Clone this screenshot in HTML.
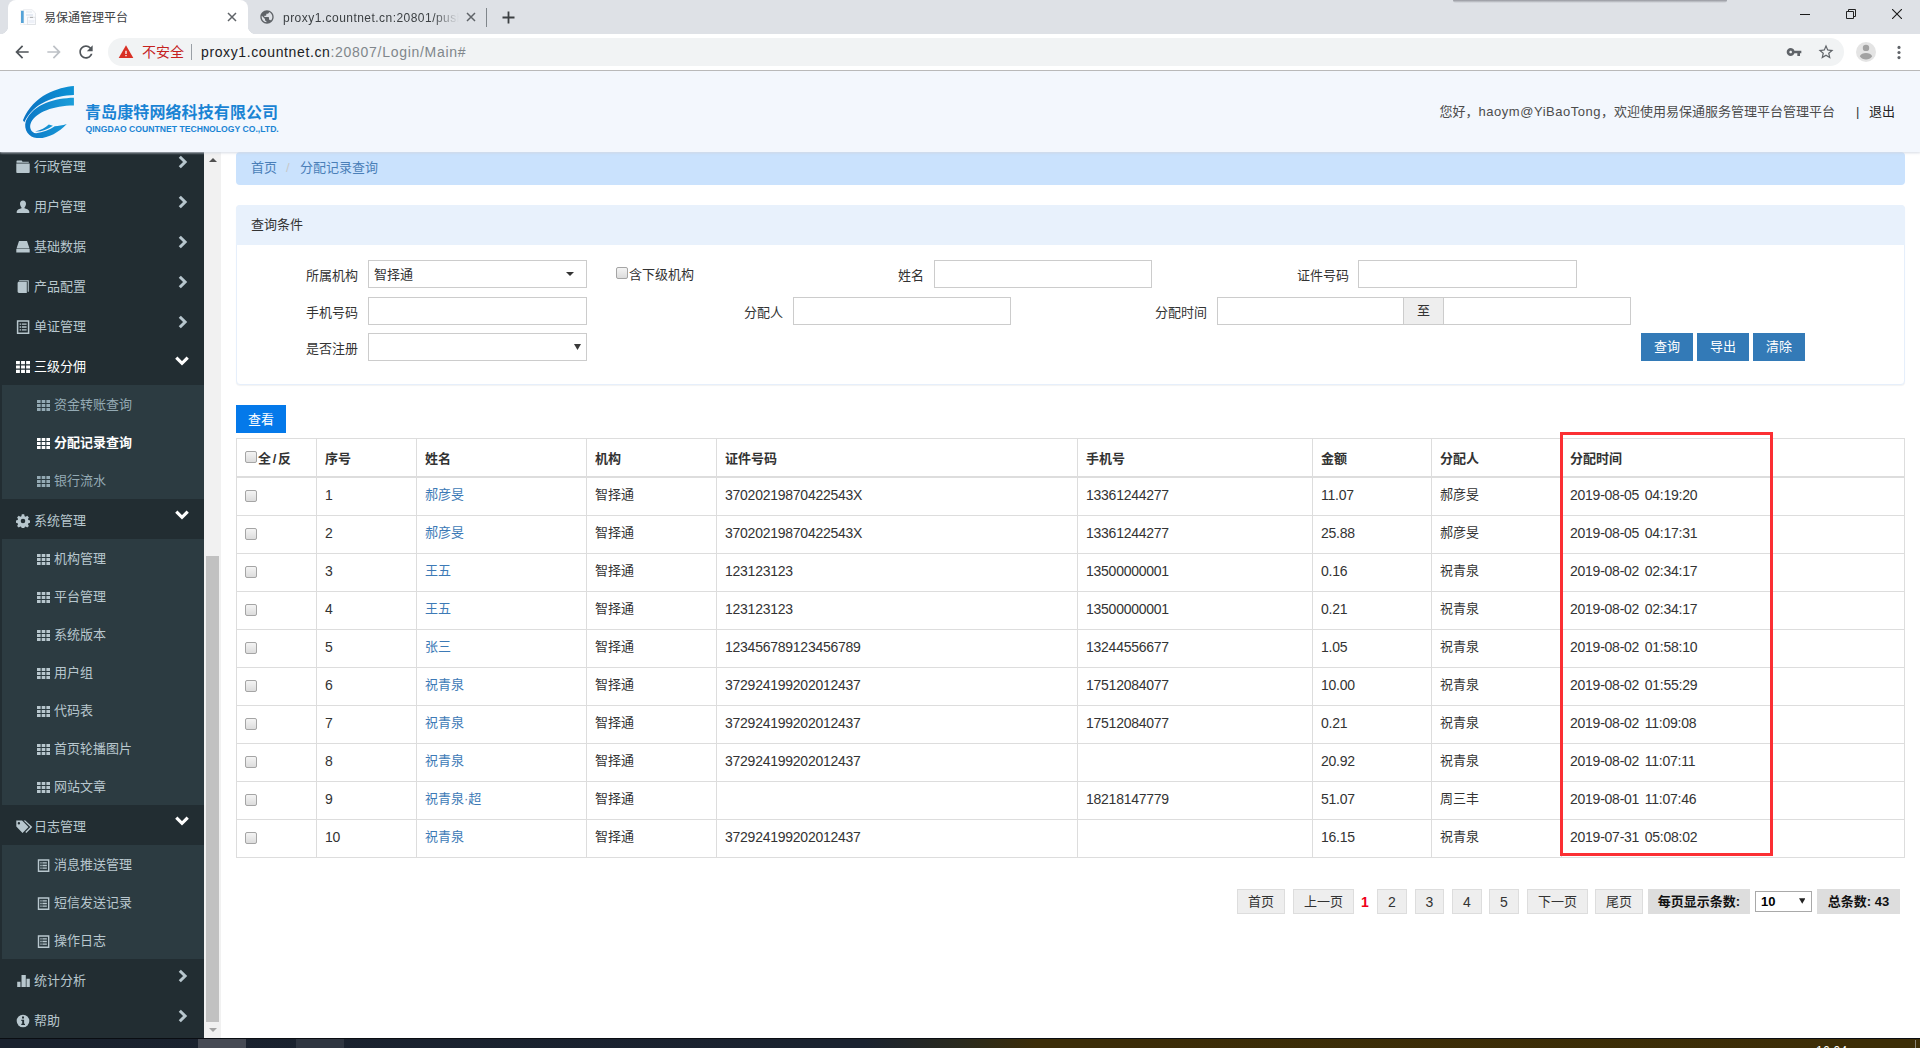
<!DOCTYPE html>
<html lang="zh-CN">
<head>
<meta charset="utf-8">
<title>易保通管理平台</title>
<style>
*{box-sizing:border-box;}
html,body{margin:0;padding:0;}
body{width:1920px;height:1048px;overflow:hidden;position:relative;background:#fff;
  font-family:"Liberation Sans","Noto Sans CJK SC",sans-serif;font-size:13px;color:#333;}
.abs{position:absolute;}
/* ===== browser chrome ===== */
#tabbar{position:absolute;left:0;top:0;width:1920px;height:34px;background:#dee1e6;}
#toolbar{position:absolute;left:0;top:34px;width:1920px;height:37px;background:#fff;border-bottom:1px solid #b9b9b9;}
#tab1{position:absolute;left:8px;top:0;width:240px;height:34px;background:#fff;border-radius:8px 8px 0 0;}
#tab1:before,#tab1:after{content:"";position:absolute;bottom:0;width:8px;height:8px;}
#tab1:before{left:-8px;background:radial-gradient(circle at 0 0,transparent 8px,#fff 8.5px);}
#tab1:after{right:-8px;background:radial-gradient(circle at 100% 0,transparent 8px,#fff 8.5px);}
.tabtxt{position:absolute;top:10px;font-size:12px;line-height:16px;color:#3c4043;white-space:nowrap;}
#omni{position:absolute;left:108px;top:4px;width:1736px;height:28px;border-radius:14px;background:#f1f3f4;}
/* ===== page ===== */
#page{position:absolute;left:0;top:71px;width:1920px;height:967px;background:#fff;overflow:hidden;}
#hdr{position:absolute;left:0;top:0;width:1920px;height:80.5px;background:#f3f7fd;box-shadow:0 0 3px 0 rgba(226,230,238,.95),0 1px 2px rgba(190,195,205,.5);z-index:5;}
#side{position:absolute;left:0;top:81px;width:204px;height:886px;background:#222d32;overflow:hidden;}
#sbar{position:absolute;left:204px;top:81px;width:17px;height:886px;background:#f1f1f1;}
#main{position:absolute;left:221px;top:81px;width:1699px;height:886px;background:#fff;}
#taskbar{position:absolute;left:0;top:1038px;width:1920px;height:10px;background:linear-gradient(90deg,#1a222e 0,#1b2330 45%,#2a2a1e 50%,#3c2d08 54%,#3d2e07 100%);border-top:1px solid #0a0d12;overflow:hidden;}

/* header */
#hdr .cn{position:absolute;left:85px;top:31.700px;font-size:16px;line-height:20px;font-weight:bold;color:#1a84d4;white-space:nowrap;letter-spacing:.1px;}
#hdr .en{position:absolute;left:85.5px;top:52.500px;font-size:8.65px;line-height:10px;font-weight:bold;color:#1a84d4;white-space:nowrap;}
#hdr .hello{position:absolute;left:1439.500px;top:31px;font-size:13px;line-height:20px;color:#4c4c4c;white-space:nowrap;}
#hdr .bar{position:absolute;left:1856px;top:31px;font-size:13px;line-height:20px;color:#333;}
#hdr .exit{position:absolute;left:1869px;top:31px;font-size:13px;line-height:20px;color:#222;white-space:nowrap;}
/* sidebar */
#menu{position:absolute;left:0;top:-7px;width:204px;}
.mi{position:relative;height:40px;color:#b8c7ce;font-size:13px;}
.mi .ic{position:absolute;left:16.3px;top:15px;width:14px;height:14px;}
.mi .tx{position:absolute;left:34px;top:11.5px;line-height:20px;white-space:nowrap;}
.mi .ar{position:absolute;left:174px;top:9px;width:16px;height:16px;}
.mi.open{color:#fff;}
.sub{margin-left:2px;background:#2c3b41;}
.si{position:relative;height:38px;color:#94aab4;font-size:13px;}
.si .ic{position:absolute;left:35px;top:13.5px;width:13px;height:13px;}
.si .tx{position:absolute;left:52px;top:10px;line-height:20px;white-space:nowrap;}
.si.act{color:#fff;font-weight:bold;}
.sub.lt .si{color:#b8c7ce;}
.mi .ar.dn{color:#fff;}

/* main: coordinates inside #main are page-x minus 221, page-y minus 152 */
#main .bc{position:absolute;left:15px;top:0;width:1669px;height:33px;background:#cae2fd;border-radius:4px;}
#main .bc span{position:absolute;top:6px;line-height:20px;font-size:13px;color:#4a7fb8;white-space:nowrap;}
#panel{position:absolute;left:15px;top:53px;width:1669px;height:180px;border:1px solid #e6effb;border-radius:4px;background:#fff;box-shadow:0 1px 1px rgba(0,0,0,.05);}
#panel .hd{position:absolute;left:-1px;top:-1px;width:1669px;height:40px;background:#e8f1fc;border-radius:4px 4px 0 0;}
#panel .hd span{position:absolute;left:15px;top:10px;line-height:20px;font-size:13px;color:#333;}
.lb{position:absolute;font-size:13px;line-height:20px;color:#333;white-space:nowrap;text-align:right;width:80px;}
.inp{position:absolute;width:219px;height:28px;border:1px solid #ccc;background:#fff;font-size:13px;line-height:20px;color:#333;}
.btn{position:absolute;height:28px;width:52px;background:#337ab7;color:#fff;font-size:13px;line-height:28px;text-align:center;}
.cb{position:absolute;width:12px;height:12px;border:1px solid #a5a5a5;border-radius:2px;background:linear-gradient(180deg,#f4f4f4,#dcdcdc);}
/* table */
#tbl{position:absolute;left:15px;top:286px;width:1669px;border-collapse:collapse;table-layout:fixed;font-size:13px;color:#333;}
#tbl th,#tbl td{border:1px solid #ddd;padding:0 0 0 8px;text-align:left;height:38px;line-height:20px;white-space:nowrap;overflow:hidden;}
#tbl th{font-weight:bold;border-bottom:2px solid #ddd;height:38px;color:#333;padding-top:4px;}
#tbl tbody tr:first-child td{height:39px;}
#tbl td{padding-bottom:3px;}
#tbl td:last-child{word-spacing:2px;}
#tbl td.n{font-size:14px;letter-spacing:-.25px;}
#tbl a{color:#3d7ab6;text-decoration:none;}
#tbl td.c,#tbl th.c{position:relative;}
/* pagination */
.pg{position:absolute;top:737px;height:25px;border:1px solid #ddd;background:#eee;font-size:13px;line-height:23px;text-align:center;color:#333;white-space:nowrap;}
.pg.d{font-size:14px;line-height:24px;}
.pgb{position:absolute;top:737px;height:25px;background:#ddd;font-size:13px;line-height:25px;text-align:center;color:#111;font-weight:bold;white-space:nowrap;}
</style>
</head>
<body>
<div id="tabbar">
  <div class="abs" style="left:1453px;top:0;width:274px;height:3px;background:linear-gradient(180deg,rgba(60,60,70,.45),rgba(60,60,70,0));border-radius:0 0 4px 4px;"></div>
  <div id="tab1"></div>
  <!-- favicon -->
  <svg class="abs" style="left:20px;top:9px" width="16" height="16" viewBox="0 0 16 16">
    <path d="M3.500 0.700h8.500l3.500 3.300v11.500h-12z" fill="#fbfcfe" stroke="#e3e6ea" stroke-width="0.800"/>
    <path d="M0.300 1.500h3.500v14h-3.500z" fill="#fdfdfd" stroke="#ececec" stroke-width="0.500"/>
    <rect x="1" y="1.800" width="2.700" height="12.200" fill="#55a3d8"/>
    <rect x="6" y="2.500" width="6" height="1" fill="#e4e8ee"/><rect x="6" y="5" width="7" height="2" fill="#e6ebf3"/>
    <path d="M7.500 8.300h8v7.200h-8z" fill="#fafbfe" stroke="#d9dbe0" stroke-width="0.700"/>
    <rect x="10" y="7.900" width="3" height="0.800" fill="#9a9a9a"/>
    <rect x="8.500" y="11" width="6" height="3" fill="#eef1f8"/>
  </svg>
  <div class="tabtxt" style="left:44px;">易保通管理平台</div>
  <svg class="abs" style="left:227px;top:12px" width="10" height="10" viewBox="0 0 10 10"><path d="M1 1l8 8M9 1l-8 8" stroke="#5f6368" stroke-width="1.5" fill="none"/></svg>
  <!-- tab 2 -->
  <svg class="abs" style="left:259px;top:9px" width="16" height="16" viewBox="0 0 24 24"><path fill="#5f6368" d="M12 2C6.48 2 2 6.48 2 12s4.48 10 10 10 10-4.480 10-10S17.520 2 12 2zm-1 17.930c-3.950-.490-7-3.850-7-7.930 0-.620.080-1.210.210-1.790L9 15v1c0 1.100.9 2 2 2v1.930zm6.900-2.540c-.260-.810-1-1.390-1.900-1.390h-1v-3c0-.550-.450-1-1-1H8v-2h2c.550 0 1-.450 1-1V7h2c1.100 0 2-.9 2-2v-.410c2.930 1.190 5 4.060 5 7.410 0 2.080-.8 3.970-2.100 5.390z"/></svg>
  <div class="tabtxt" id="t2txt" style="left:283px;width:176px;overflow:hidden;letter-spacing:.46px;-webkit-mask-image:linear-gradient(90deg,#000 0,#000 150px,transparent 176px);mask-image:linear-gradient(90deg,#000 0,#000 150px,transparent 176px);">proxy1.countnet.cn:20801/push/index</div>
  <svg class="abs" style="left:466px;top:12px" width="10" height="10" viewBox="0 0 10 10"><path d="M1 1l8 8M9 1l-8 8" stroke="#5f6368" stroke-width="1.5" fill="none"/></svg>
  <div class="abs" style="left:486px;top:8px;width:1px;height:19px;background:#80868b;"></div>
  <svg class="abs" style="left:502px;top:11px" width="13" height="13" viewBox="0 0 13 13"><path d="M6.500 0.500v12M0.500 6.500h12" stroke="#3c4043" stroke-width="1.800" fill="none"/></svg>
  <!-- window controls -->
  <svg class="abs" style="left:1800px;top:8px" width="10" height="12" viewBox="0 0 10 12"><path d="M0 6.500h10" stroke="#1a1a1a" stroke-width="1" fill="none"/></svg>
  <svg class="abs" style="left:1845px;top:8px" width="12" height="12" viewBox="0 0 12 12"><path d="M1.500 3.500h7v7h-7zM3.500 3.500v-2h7v7h-2" stroke="#222" stroke-width="1" fill="none"/></svg>
  <svg class="abs" style="left:1892px;top:9px" width="10" height="10" viewBox="0 0 10 10"><path d="M0 0l10 10M10 0l-10 10" stroke="#1a1a1a" stroke-width="1.100" fill="none"/></svg>
</div>
<div id="toolbar">
  <!-- back -->
  <svg class="abs" style="left:12px;top:8px" width="20" height="20" viewBox="0 0 24 24"><path fill="#50555a" d="M20 11H7.830l5.590-5.590L12 4l-8 8 8 8 1.410-1.410L7.830 13H20v-2z"/></svg>
  <svg class="abs" style="left:44px;top:8px" width="20" height="20" viewBox="0 0 24 24"><path fill="#bdc1c6" d="M4 11h12.170l-5.590-5.590L12 4l8 8-8 8-1.410-1.410L16.170 13H4v-2z"/></svg>
  <svg class="abs" style="left:76px;top:8px" width="20" height="20" viewBox="0 0 24 24"><path fill="#50555a" d="M17.650 6.350C16.200 4.900 14.210 4 12 4c-4.420 0-7.990 3.580-7.990 8s3.570 8 7.990 8c3.730 0 6.840-2.550 7.730-6h-2.080c-.820 2.330-3.040 4-5.650 4-3.310 0-6-2.690-6-6s2.690-6 6-6c1.660 0 3.140.690 4.220 1.780L13 11h7V4l-2.350 2.350z"/></svg>
  <div id="omni"></div>
  <svg class="abs" style="left:118px;top:10px" width="16" height="16" viewBox="0 0 24 24"><path fill="#d93025" d="M1 21h22L12 2 1 21z"/><path fill="#fff" d="M11 10h2v5h-2zM11 16.500h2v2h-2z"/></svg>
  <div class="abs" style="left:142px;top:8px;font-size:14px;line-height:20px;color:#c5221f;white-space:nowrap;">不安全</div>
  <div class="abs" style="left:191px;top:10px;width:1px;height:16px;background:#9aa0a6;"></div>
  <div class="abs" id="url" style="left:201px;top:8px;font-size:14px;line-height:20px;color:#202124;white-space:nowrap;letter-spacing:.62px;">proxy1.countnet.cn<span style="color:#80868b;letter-spacing:.71px;">:20807/Login/Main#</span></div>
  <!-- key -->
  <svg class="abs" style="left:1786px;top:10px" width="16" height="16" viewBox="0 0 24 24"><path fill="#5f6368" d="M12.650 10C11.830 7.670 9.610 6 7 6c-3.310 0-6 2.690-6 6s2.690 6 6 6c2.610 0 4.830-1.670 5.650-4H17v4h4v-4h2v-4H12.650zM7 14c-1.100 0-2-.9-2-2s.9-2 2-2 2 .9 2 2-.9 2-2 2z"/></svg>
  <svg class="abs" style="left:1817px;top:9px" width="18" height="18" viewBox="0 0 24 24"><path fill="#5f6368" d="M22 9.240l-7.190-.620L12 2 9.190 8.630 2 9.240l5.460 4.730L5.820 21 12 17.270 18.180 21l-1.630-7.030L22 9.240zM12 15.400l-3.760 2.270 1-4.280-3.320-2.880 4.380-.380L12 6.100l1.710 4.040 4.380.380-3.320 2.880 1 4.280L12 15.400z"/></svg>
  <svg class="abs" style="left:1856px;top:8px" width="20" height="20" viewBox="0 0 20 20"><circle cx="10" cy="10" r="10" fill="#e4e4e4"/><circle cx="10" cy="5.900" r="3.200" fill="#a2a2a2"/><path d="M3.800 14.300c1.100-2.400 3.400-3.300 6.200-3.300s5.100.9 6.200 3.300c-1.500 2.100-3.700 3.300-6.200 3.300s-4.700-1.200-6.200-3.300z" fill="#a2a2a2"/></svg>
  <svg class="abs" style="left:1896.500px;top:10px" width="4" height="16" viewBox="0 0 4 16"><circle cx="2" cy="3.400" r="1.550" fill="#5f6368"/><circle cx="2" cy="8.500" r="1.550" fill="#5f6368"/><circle cx="2" cy="13.600" r="1.550" fill="#5f6368"/></svg>
</div>
<div id="page">
  <div id="hdr">
    <svg class="abs" style="left:15px;top:9px" width="80" height="65" viewBox="0 0 1290 1048">
      <defs><linearGradient id="lg1" x1="0" y1="0" x2="1" y2="0"><stop offset="0" stop-color="#0b72c1"/><stop offset="1" stop-color="#0d93d6"/></linearGradient>
      <linearGradient id="lg2" x1="0" y1="0" x2="1" y2="0"><stop offset="0" stop-color="#0b78c6"/><stop offset="1" stop-color="#1b9eda"/></linearGradient></defs>
      <path fill="url(#lg1)" d="M950,95 C700,120 300,230 128,650 L150,682 C300,360 650,250 950,240 Z"/>
      <path fill="url(#lg2)" d="M950,285 C650,290 300,380 175,660 C130,800 230,930 350,935 C520,950 700,850 835,708 C760,730 700,742 640,747 C560,800 450,850 340,858 C260,850 220,760 260,680 C340,520 620,410 950,410 Z"/>
      <path fill="url(#lg2)" d="M545,718 L612,736 C520,800 420,836 325,830 C420,810 490,770 545,718 Z"/>
    </svg>
    <div class="cn">青岛康特网络科技有限公司</div>
    <div class="en">QINGDAO COUNTNET TECHNOLOGY CO.,LTD.</div>
    <div class="hello">您好，<span style="letter-spacing:.53px;">haoym@YiBaoTong</span>，欢迎使用易保通服务管理平台管理平台</div>
    <div class="bar">|</div>
    <div class="exit">退出</div>
  </div>
  <div id="side"><div id="menu"><div class="mi"><svg class="ic" viewBox="0 0 14 14"><path fill="currentColor" d="M1.300 0.400h4.400l.8 1.300h6.300v1h-12.300v-1.500c0-.5.300-.8.800-.8zM0.300 3.500h13.400v8.700c0 .5-.3.800-.8.800h-11.800c-.5 0-.8-.3-.8-.8z"/></svg><span class="tx">行政管理</span><svg class="ar" viewBox="0 0 16 16"><path fill="none" stroke="currentColor" stroke-width="3" d="M5.800 2.700l5.300 5.300-5.300 5.300"/></svg></div><div class="mi"><svg class="ic" viewBox="0 0 14 14"><path fill="currentColor" d="M7 0.500c1.900 0 3 1.400 3 3.300 0 1.500-.7 2.900-1.500 3.600v.9c1.800.5 4.500 1.300 4.800 3.200v1.500H.7v-1.500c.3-1.900 3-2.700 4.800-3.200v-.9C4.700 6.700 4 5.300 4 3.800 4 1.900 5.100.5 7 .5z"/></svg><span class="tx">用户管理</span><svg class="ar" viewBox="0 0 16 16"><path fill="none" stroke="currentColor" stroke-width="3" d="M5.800 2.700l5.300 5.300-5.300 5.300"/></svg></div><div class="mi"><svg class="ic" viewBox="0 0 14 14"><path fill="currentColor" d="M3 1h8l2.500 7.500h-13z M0.300 9h13.400v3.500h-13.400z"/></svg><span class="tx">基础数据</span><svg class="ar" viewBox="0 0 16 16"><path fill="none" stroke="currentColor" stroke-width="3" d="M5.800 2.700l5.300 5.300-5.300 5.300"/></svg></div><div class="mi"><svg class="ic" viewBox="0 0 14 14"><path fill="currentColor" d="M3 1.800h7.800v11.200h-7.800c-.8 0-1.400-.6-1.400-1.400v-8.400c0-.8.600-1.400 1.400-1.400z"/><path fill="currentColor" d="M3.600 .3h9.200v11.400h-1.100v-10.400h-8.900c.1-.6.400-1 .8-1z"/></svg><span class="tx">产品配置</span><svg class="ar" viewBox="0 0 16 16"><path fill="none" stroke="currentColor" stroke-width="3" d="M5.800 2.700l5.300 5.300-5.300 5.300"/></svg></div><div class="mi"><svg class="ic" viewBox="0 0 14 14"><path fill="none" stroke="currentColor" stroke-width="1.500" d="M1.600 1h11v12.200h-11z"/><path fill="currentColor" d="M3.600 3.400h1.400v1.400h-1.400zM5.800 3.400h4.800v1.400h-4.800zM3.600 6.300h1.400v1.400h-1.400zM5.800 6.300h4.800v1.400h-4.800zM3.600 9.200h1.400v1.400h-1.400zM5.800 9.200h4.800v1.400h-4.800z"/></svg><span class="tx">单证管理</span><svg class="ar" viewBox="0 0 16 16"><path fill="none" stroke="currentColor" stroke-width="3" d="M5.800 2.700l5.300 5.300-5.300 5.300"/></svg></div><div class="mi open"><svg class="ic" viewBox="0 0 13 13"><path fill="currentColor" d="M0 1h3.600v3h-3.600zM4.700 1h3.600v3h-3.600zM9.400 1h3.600v3h-3.600zM0 5h3.600v3h-3.600zM4.700 5h3.600v3h-3.600zM9.400 5h3.600v3h-3.600zM0 9h3.600v3h-3.600zM4.700 9h3.600v3h-3.600zM9.400 9h3.600v3h-3.600z"/></svg><span class="tx">三级分佣</span><svg class="ar dn" viewBox="0 0 16 16"><path fill="none" stroke="currentColor" stroke-width="3.200" d="M2.300 3.700l5.700 5.600 5.700-5.600"/></svg></div><div class="sub"><div class="si"><svg class="ic" viewBox="0 0 13 13"><path fill="currentColor" d="M0 1h3.600v3h-3.600zM4.700 1h3.600v3h-3.600zM9.400 1h3.600v3h-3.600zM0 5h3.600v3h-3.600zM4.700 5h3.600v3h-3.600zM9.400 5h3.600v3h-3.600zM0 9h3.600v3h-3.600zM4.700 9h3.600v3h-3.600zM9.400 9h3.600v3h-3.600z"/></svg><span class="tx">资金转账查询</span></div><div class="si act"><svg class="ic" viewBox="0 0 13 13"><path fill="currentColor" d="M0 1h3.600v3h-3.600zM4.700 1h3.600v3h-3.600zM9.400 1h3.600v3h-3.600zM0 5h3.600v3h-3.600zM4.700 5h3.600v3h-3.600zM9.400 5h3.600v3h-3.600zM0 9h3.600v3h-3.600zM4.700 9h3.600v3h-3.600zM9.400 9h3.600v3h-3.600z"/></svg><span class="tx">分配记录查询</span></div><div class="si"><svg class="ic" viewBox="0 0 13 13"><path fill="currentColor" d="M0 1h3.600v3h-3.600zM4.700 1h3.600v3h-3.600zM9.400 1h3.600v3h-3.600zM0 5h3.600v3h-3.600zM4.700 5h3.600v3h-3.600zM9.400 5h3.600v3h-3.600zM0 9h3.600v3h-3.600zM4.700 9h3.600v3h-3.600zM9.400 9h3.600v3h-3.600z"/></svg><span class="tx">银行流水</span></div></div><div class="mi"><svg class="ic" viewBox="0 0 14 14"><path fill="currentColor" fill-rule="evenodd" d="M5.800 0.300h2.400l.4 1.900 1 .5 1.700-1 1.600 1.700-1 1.600.5 1.100 1.900.4v2.300l-1.900.4-.5 1.100 1 1.600-1.600 1.700-1.700-1-1 .5-.4 1.900H5.800l-.4-1.900-1-.5-1.700 1L1.100 11.900l1-1.600-.5-1.100-1.900-.4V6.500l1.900-.4.500-1.100-1-1.600L2.700 1.700l1.700 1 1-.5zM7 4.700a2.300 2.300 0 1 0 0 4.600 2.300 2.300 0 0 0 0-4.600z"/></svg><span class="tx">系统管理</span><svg class="ar dn" viewBox="0 0 16 16"><path fill="none" stroke="currentColor" stroke-width="3.200" d="M2.300 3.700l5.700 5.600 5.700-5.600"/></svg></div><div class="sub lt"><div class="si"><svg class="ic" viewBox="0 0 13 13"><path fill="currentColor" d="M0 1h3.600v3h-3.600zM4.700 1h3.600v3h-3.600zM9.400 1h3.600v3h-3.600zM0 5h3.600v3h-3.600zM4.700 5h3.600v3h-3.600zM9.400 5h3.600v3h-3.600zM0 9h3.600v3h-3.600zM4.700 9h3.600v3h-3.600zM9.400 9h3.600v3h-3.600z"/></svg><span class="tx">机构管理</span></div><div class="si"><svg class="ic" viewBox="0 0 13 13"><path fill="currentColor" d="M0 1h3.600v3h-3.600zM4.700 1h3.600v3h-3.600zM9.400 1h3.600v3h-3.600zM0 5h3.600v3h-3.600zM4.700 5h3.600v3h-3.600zM9.400 5h3.600v3h-3.600zM0 9h3.600v3h-3.600zM4.700 9h3.600v3h-3.600zM9.400 9h3.600v3h-3.600z"/></svg><span class="tx">平台管理</span></div><div class="si"><svg class="ic" viewBox="0 0 13 13"><path fill="currentColor" d="M0 1h3.600v3h-3.600zM4.700 1h3.600v3h-3.600zM9.400 1h3.600v3h-3.600zM0 5h3.600v3h-3.600zM4.700 5h3.600v3h-3.600zM9.400 5h3.600v3h-3.600zM0 9h3.600v3h-3.600zM4.700 9h3.600v3h-3.600zM9.400 9h3.600v3h-3.600z"/></svg><span class="tx">系统版本</span></div><div class="si"><svg class="ic" viewBox="0 0 13 13"><path fill="currentColor" d="M0 1h3.600v3h-3.600zM4.700 1h3.600v3h-3.600zM9.400 1h3.600v3h-3.600zM0 5h3.600v3h-3.600zM4.700 5h3.600v3h-3.600zM9.400 5h3.600v3h-3.600zM0 9h3.600v3h-3.600zM4.700 9h3.600v3h-3.600zM9.400 9h3.600v3h-3.600z"/></svg><span class="tx">用户组</span></div><div class="si"><svg class="ic" viewBox="0 0 13 13"><path fill="currentColor" d="M0 1h3.600v3h-3.600zM4.700 1h3.600v3h-3.600zM9.400 1h3.600v3h-3.600zM0 5h3.600v3h-3.600zM4.700 5h3.600v3h-3.600zM9.400 5h3.600v3h-3.600zM0 9h3.600v3h-3.600zM4.700 9h3.600v3h-3.600zM9.400 9h3.600v3h-3.600z"/></svg><span class="tx">代码表</span></div><div class="si"><svg class="ic" viewBox="0 0 13 13"><path fill="currentColor" d="M0 1h3.600v3h-3.600zM4.700 1h3.600v3h-3.600zM9.400 1h3.600v3h-3.600zM0 5h3.600v3h-3.600zM4.700 5h3.600v3h-3.600zM9.400 5h3.600v3h-3.600zM0 9h3.600v3h-3.600zM4.700 9h3.600v3h-3.600zM9.400 9h3.600v3h-3.600z"/></svg><span class="tx">首页轮播图片</span></div><div class="si"><svg class="ic" viewBox="0 0 13 13"><path fill="currentColor" d="M0 1h3.600v3h-3.600zM4.700 1h3.600v3h-3.600zM9.400 1h3.600v3h-3.600zM0 5h3.600v3h-3.600zM4.700 5h3.600v3h-3.600zM9.400 5h3.600v3h-3.600zM0 9h3.600v3h-3.600zM4.700 9h3.600v3h-3.600zM9.400 9h3.600v3h-3.600z"/></svg><span class="tx">网站文章</span></div></div><div class="mi"><svg class="ic" style="width:17px;height:14px;" viewBox="0 0 17 14"><path fill="currentColor" fill-rule="evenodd" d="M0.300 .5h5.800l6.400 6.400-6 6.100-6.200-6.400zM2.900 2a1.200 1.200 0 1 0 0 2.400 1.200 1.200 0 0 0 0-2.400z"/><path fill="currentColor" d="M7.600 .5h1.700l7 6.400-6 6.100-1-.9 5-5.200z"/></svg><span class="tx">日志管理</span><svg class="ar dn" viewBox="0 0 16 16"><path fill="none" stroke="currentColor" stroke-width="3.200" d="M2.300 3.700l5.700 5.600 5.700-5.600"/></svg></div><div class="sub lt"><div class="si"><svg class="ic" viewBox="0 0 14 14"><path fill="none" stroke="currentColor" stroke-width="1.500" d="M1.600 1h11v12.200h-11z"/><path fill="currentColor" d="M3.600 3.400h1.400v1.400h-1.400zM5.800 3.400h4.800v1.400h-4.800zM3.600 6.300h1.400v1.400h-1.400zM5.800 6.300h4.800v1.400h-4.800zM3.600 9.200h1.400v1.400h-1.400zM5.800 9.200h4.800v1.400h-4.800z"/></svg><span class="tx">消息推送管理</span></div><div class="si"><svg class="ic" viewBox="0 0 14 14"><path fill="none" stroke="currentColor" stroke-width="1.500" d="M1.600 1h11v12.200h-11z"/><path fill="currentColor" d="M3.600 3.400h1.400v1.400h-1.400zM5.800 3.400h4.800v1.400h-4.800zM3.600 6.300h1.400v1.400h-1.400zM5.800 6.300h4.800v1.400h-4.800zM3.600 9.200h1.400v1.400h-1.400zM5.800 9.200h4.800v1.400h-4.800z"/></svg><span class="tx">短信发送记录</span></div><div class="si"><svg class="ic" viewBox="0 0 14 14"><path fill="none" stroke="currentColor" stroke-width="1.500" d="M1.600 1h11v12.200h-11z"/><path fill="currentColor" d="M3.600 3.400h1.400v1.400h-1.400zM5.800 3.400h4.800v1.400h-4.800zM3.600 6.300h1.400v1.400h-1.400zM5.800 6.300h4.800v1.400h-4.800zM3.600 9.200h1.400v1.400h-1.400zM5.800 9.200h4.800v1.400h-4.800z"/></svg><span class="tx">操作日志</span></div></div><div class="mi"><svg class="ic" viewBox="0 0 14 14"><path fill="currentColor" d="M1.200 7.800h3.300v5.200h-3.300zM5.500 1h4.300v12h-4.300zM10.500 4.700h3.300v8.300h-3.300z"/></svg><span class="tx">统计分析</span><svg class="ar" viewBox="0 0 16 16"><path fill="none" stroke="currentColor" stroke-width="3" d="M5.800 2.700l5.300 5.300-5.300 5.300"/></svg></div><div class="mi"><svg class="ic" viewBox="0 0 14 14"><circle cx="7" cy="7" r="6.300" fill="currentColor"/><path fill="#222d32" d="M6 2.500h2v2h-2zM5.300 5.800h2.800v4h.9v1.200h-3.700v-1.200h.9v-2.800h-.9z"/></svg><span class="tx">帮助</span><svg class="ar" viewBox="0 0 16 16"><path fill="none" stroke="currentColor" stroke-width="3" d="M5.800 2.700l5.300 5.300-5.300 5.300"/></svg></div></div></div>
  <div id="sbar">
    <svg class="abs" style="left:4.500px;top:6px" width="8" height="4" viewBox="0 0 8 4"><path d="M0 4l4-4 4 4z" fill="#505050"/></svg>
    <div class="abs" style="left:2px;top:404px;width:13px;height:466px;background:#c1c1c1;"></div>
    <svg class="abs" style="left:4.500px;top:876px" width="8" height="4" viewBox="0 0 8 4"><path d="M0 0l4 4 4-4z" fill="#a3a3a3"/></svg>
  </div>
  <div id="main"><div class="bc"><span style="left:15px;">首页</span><span style="left:50px;color:#c8c8c8;">/</span><span style="left:64px;">分配记录查询</span></div><div id="panel"><div class="hd"><span>查询条件</span></div></div><div class="lb" style="left:57px;top:114px;">所属机构</div><div class="inp" style="left:147px;top:108px;width:219px;"><span style="position:absolute;left:5px;top:3.5px;">智择通</span><svg style="position:absolute;left:197px;top:11px" width="8" height="4" viewBox="0 0 8 4"><path d="M0 0h8l-4 4z" fill="#333"/></svg></div><div class="cb" style="left:395px;top:115px;"></div><div class="lb" style="left:408px;top:113px;text-align:left;">含下级机构</div><div class="lb" style="left:623px;top:114px;">姓名</div><div class="inp" style="left:713px;top:108px;width:218px;"></div><div class="lb" style="left:1048px;top:114px;">证件号码</div><div class="inp" style="left:1137px;top:108px;width:219px;"></div><div class="lb" style="left:57px;top:151px;">手机号码</div><div class="inp" style="left:147px;top:145px;width:219px;"></div><div class="lb" style="left:482px;top:151px;">分配人</div><div class="inp" style="left:572px;top:145px;width:218px;"></div><div class="lb" style="left:906px;top:151px;">分配时间</div><div class="inp" style="left:996px;top:145px;width:187px;"></div><div class="inp" style="left:1182px;top:145px;width:41px;background:#eee;text-align:center;line-height:26px;">至</div><div class="inp" style="left:1222px;top:145px;width:188px;"></div><div class="lb" style="left:57px;top:187px;">是否注册</div><div class="inp" style="left:147px;top:181px;width:219px;"><svg style="position:absolute;left:205px;top:10px" width="7" height="6" viewBox="0 0 7 6"><path d="M0 0h7l-3.500 6z" fill="#3a3a3a"/></svg></div><div class="btn" style="left:1420px;top:181px;">查询</div><div class="btn" style="left:1476px;top:181px;">导出</div><div class="btn" style="left:1532px;top:181px;">清除</div><div class="btn" style="left:15px;top:253px;width:50px;background:#0479ea;line-height:30px;">查看</div><table id="tbl"><colgroup><col style="width:80px"><col style="width:100px"><col style="width:170px"><col style="width:130px"><col style="width:361px"><col style="width:235px"><col style="width:119px"><col style="width:130px"><col style="width:343px"></colgroup><thead><tr><th class="c"><div class="cb" style="left:8px;top:12px;"></div><span style="margin-left:13px;">全<span style="padding:0 1.700px;">/</span>反</span></th><th>序号</th><th>姓名</th><th>机构</th><th>证件号码</th><th>手机号</th><th>金额</th><th>分配人</th><th>分配时间</th></tr></thead><tbody><tr><td class="c"><div class="cb" style="left:8px;top:12px;"></div></td><td class="n">1</td><td><a>郝彦旻</a></td><td>智择通</td><td class="n">37020219870422543X</td><td class="n">13361244277</td><td class="n">11.07</td><td>郝彦旻</td><td class="n">2019-08-05 04:19:20</td></tr><tr><td class="c"><div class="cb" style="left:8px;top:12px;"></div></td><td class="n">2</td><td><a>郝彦旻</a></td><td>智择通</td><td class="n">37020219870422543X</td><td class="n">13361244277</td><td class="n">25.88</td><td>郝彦旻</td><td class="n">2019-08-05 04:17:31</td></tr><tr><td class="c"><div class="cb" style="left:8px;top:12px;"></div></td><td class="n">3</td><td><a>王五</a></td><td>智择通</td><td class="n">123123123</td><td class="n">13500000001</td><td class="n">0.16</td><td>祝青泉</td><td class="n">2019-08-02 02:34:17</td></tr><tr><td class="c"><div class="cb" style="left:8px;top:12px;"></div></td><td class="n">4</td><td><a>王五</a></td><td>智择通</td><td class="n">123123123</td><td class="n">13500000001</td><td class="n">0.21</td><td>祝青泉</td><td class="n">2019-08-02 02:34:17</td></tr><tr><td class="c"><div class="cb" style="left:8px;top:12px;"></div></td><td class="n">5</td><td><a>张三</a></td><td>智择通</td><td class="n">123456789123456789</td><td class="n">13244556677</td><td class="n">1.05</td><td>祝青泉</td><td class="n">2019-08-02 01:58:10</td></tr><tr><td class="c"><div class="cb" style="left:8px;top:12px;"></div></td><td class="n">6</td><td><a>祝青泉</a></td><td>智择通</td><td class="n">372924199202012437</td><td class="n">17512084077</td><td class="n">10.00</td><td>祝青泉</td><td class="n">2019-08-02 01:55:29</td></tr><tr><td class="c"><div class="cb" style="left:8px;top:12px;"></div></td><td class="n">7</td><td><a>祝青泉</a></td><td>智择通</td><td class="n">372924199202012437</td><td class="n">17512084077</td><td class="n">0.21</td><td>祝青泉</td><td class="n">2019-08-02 11:09:08</td></tr><tr><td class="c"><div class="cb" style="left:8px;top:12px;"></div></td><td class="n">8</td><td><a>祝青泉</a></td><td>智择通</td><td class="n">372924199202012437</td><td class="n"></td><td class="n">20.92</td><td>祝青泉</td><td class="n">2019-08-02 11:07:11</td></tr><tr><td class="c"><div class="cb" style="left:8px;top:12px;"></div></td><td class="n">9</td><td><a>祝青泉·超</a></td><td>智择通</td><td class="n"></td><td class="n">18218147779</td><td class="n">51.07</td><td>周三丰</td><td class="n">2019-08-01 11:07:46</td></tr><tr><td class="c"><div class="cb" style="left:8px;top:12px;"></div></td><td class="n">10</td><td><a>祝青泉</a></td><td>智择通</td><td class="n">372924199202012437</td><td class="n"></td><td class="n">16.15</td><td>祝青泉</td><td class="n">2019-07-31 05:08:02</td></tr></tbody></table><div class="abs" style="left:1339px;top:280px;width:213px;height:424px;border:3px solid #fb2f33;"></div><div class="pg" style="left:1016px;width:48px;">首页</div><div class="pg" style="left:1072px;width:61px;">上一页</div><div class="abs" style="left:1140px;top:737px;line-height:26px;font-size:14px;font-weight:bold;color:#f00018;">1</div><div class="pg d" style="left:1156px;width:30px;">2</div><div class="pg d" style="left:1194px;width:29px;">3</div><div class="pg d" style="left:1231px;width:30px;">4</div><div class="pg d" style="left:1268px;width:30px;">5</div><div class="pg" style="left:1306px;width:61px;">下一页</div><div class="pg" style="left:1374px;width:48px;">尾页</div><div class="pgb" style="left:1427px;width:102px;">每页显示条数:</div><div class="abs" style="left:1534px;top:739px;width:57px;height:21px;border:1px solid #a9a9a9;background:#fff;font-size:13px;font-weight:bold;line-height:19px;color:#000;"><span style="position:absolute;left:5px;top:0;">10</span><svg style="position:absolute;left:42.500px;top:6px" width="6.500" height="6" viewBox="0 0 7 6"><path d="M0 0h7l-3.500 6z" fill="#222"/></svg></div><div class="pgb" style="left:1596px;width:83px;">总条数: 43</div></div>
</div>
<div id="taskbar">
  <div class="abs" style="left:198px;top:0;width:48px;height:10px;background:#464a54;"></div>
  <div class="abs" style="left:296px;top:0;width:48px;height:10px;background:#2f3641;"></div>
  <div class="abs" style="left:1816px;top:6px;font-size:12px;line-height:12px;color:#fff;white-space:nowrap;letter-spacing:.3px;">16:04</div>
  <div class="abs" style="left:1915px;top:1px;width:1px;height:9px;background:#8a8577;"></div>
</div>
</body>
</html>
